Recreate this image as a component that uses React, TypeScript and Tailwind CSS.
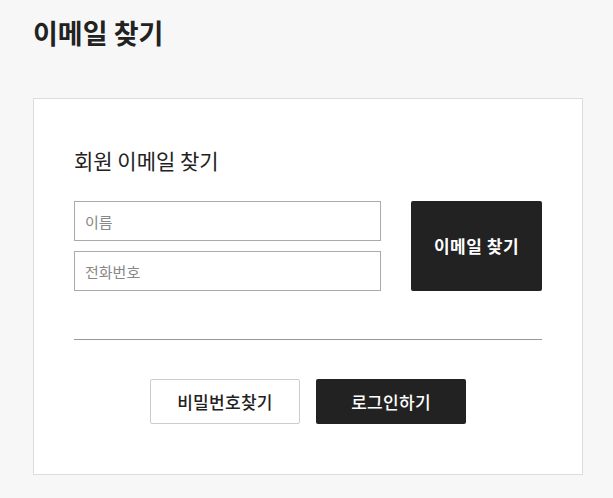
export default function App() {
  return (
    <div
      className="min-h-[498px] bg-[#f7f7f7] px-[33px] pt-[14px] pb-6 text-[#222]"
      style={{ fontFamily: '"Noto Sans CJK KR", "Noto Sans", sans-serif' }}
    >
      <h1 className="text-[27px] font-bold leading-[38px]">이메일 찾기</h1>

      <div className="mt-[46px] w-[550px] border border-[#dcdcdc] bg-white px-10 pt-[46px] pb-[50px]">
        <h2 className="text-[21px] leading-[30px]">회원 이메일 찾기</h2>

        <div className="mt-[26px] flex gap-[30px]">
          <div className="flex flex-1 flex-col gap-[10px]">
            <input
              placeholder="이름"
              className="h-10 w-full border border-[#aaa] px-[10px] text-[15px] outline-none placeholder:text-[#888]"
            />
            <input
              placeholder="전화번호"
              className="h-10 w-full border border-[#aaa] px-[10px] text-[15px] outline-none placeholder:text-[#888]"
            />
          </div>
          <button className="h-[90px] w-[131px] rounded-[2px] bg-[#222] text-[17px] font-bold tracking-[0.5px] text-white">
            이메일 찾기
          </button>
        </div>

        <div className="mt-[48px] h-px bg-[#999]" />

        <div className="mt-[39px] flex justify-center gap-4">
          <button className="h-[45px] w-[150px] rounded-[2px] border border-[#ccc] bg-white text-[17px] font-medium tracking-[0.3px]">
            비밀번호찾기
          </button>
          <button className="h-[45px] w-[150px] rounded-[2px] bg-[#222] text-[17px] font-medium tracking-[0.3px] text-white">
            로그인하기
          </button>
        </div>
      </div>
    </div>
  )
}
